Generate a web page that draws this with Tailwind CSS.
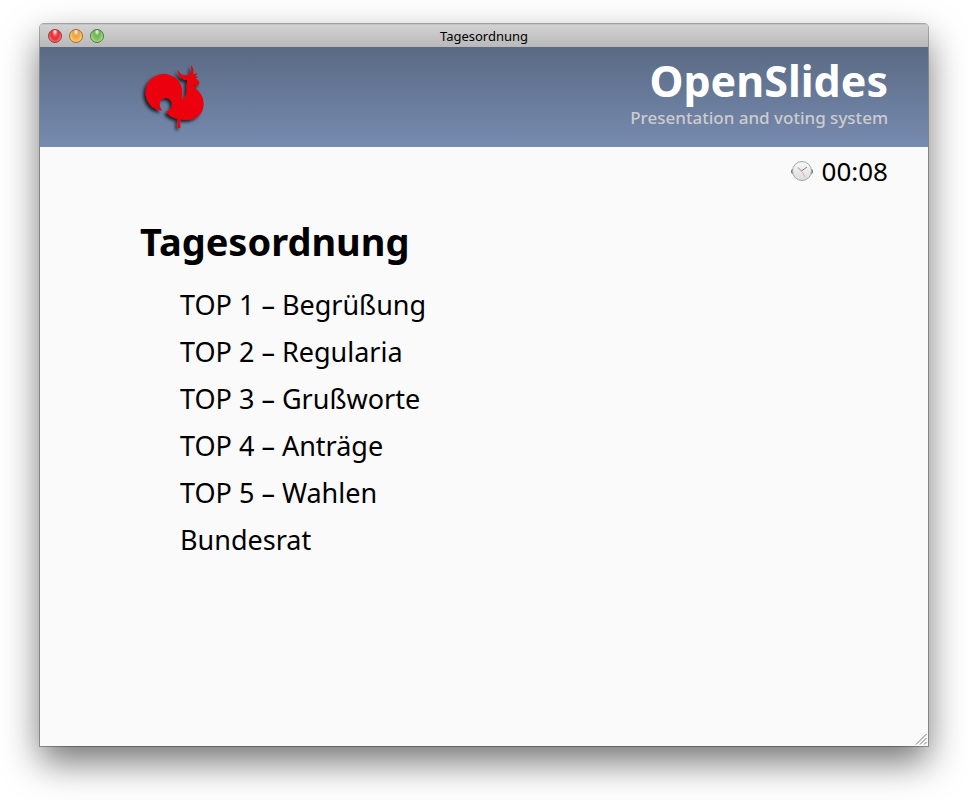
<!DOCTYPE html>
<html lang="de">
<head>
<meta charset="utf-8">
<meta name="viewport" content="width=device-width, initial-scale=1">
<title>Tagesordnung</title>
<script src="https://cdn.jsdelivr.net/npm/@tailwindcss/browser@4"></script>
</head>
<body class="flex min-h-screen flex-col bg-white px-10 pt-6 pb-[54px] font-['Noto_Sans','Open_Sans',sans-serif] text-black">
<div class="relative flex flex-1 flex-col rounded-t bg-[#fafafa] shadow-[0_0_0_1px_rgba(0,0,0,0.3),0_16px_36px_rgba(0,0,0,0.55)]">
  <div class="grid h-[23px] grid-cols-3 items-center rounded-t border-t border-[#c4c4c4] bg-linear-to-b from-[#d2d2d2] to-[#b9b9b9] px-2">
    <div class="flex gap-[7px]">
      <button aria-label="Schließen" class="size-3.5 rounded-full border border-[#8b3c3c] bg-[radial-gradient(ellipse_at_50%_15%,#fff_0,#f04a4a_28%,#ee2b35_50%,#ffb0b0_100%)]"></button>
      <button aria-label="Minimieren" class="size-3.5 rounded-full border border-[#a06a35] bg-[radial-gradient(ellipse_at_50%_15%,#fff_0,#eda04a_28%,#f5ae50_50%,#fff0a0_100%)]"></button>
      <button aria-label="Zoomen" class="size-3.5 rounded-full border border-[#4c7a3c] bg-[radial-gradient(ellipse_at_50%_15%,#fff_0,#6eb456_28%,#7ec060_50%,#d4f5ac_100%)]"></button>
    </div>
    <div class="text-center text-[13px] leading-5">Tagesordnung</div>
  </div>
  <header class="flex h-[100px] items-start justify-between bg-linear-to-b from-[#5a6a84] to-[#778bb0] pr-10 pl-[90px]">
    <svg class="mt-2 h-[85px] w-[90px]" viewBox="0 0 270 255" role="img" aria-label="Logo">
      <defs><filter id="shadow" x="-20%" y="-20%" width="140%" height="140%"><feDropShadow dx="-7" dy="7" stdDeviation="5" flood-color="#000" flood-opacity=".75"/></filter></defs>
      <g filter="url(#shadow)" fill="#ed0007">
        <path d="M97 167C68 165 47 142 47 112C47 81 71 57 102 57C133 57 157 81 157 110C157 120 156 128 154 134C166 128 171 117 170 103C169 91 172 82 172 75C158 77 144 65 142 43C149 57 160 64 174 60C184 56 186 45 182 30C190 37 193 48 189 58L203 55L195 64L205 66L196 71L204 75C202 78 196 78 191 80C188 88 193 97 202 105C213 114 221 130 221 146C221 176 199 194 172 194C145 194 120 188 108 170C120 167 126 159 126 148C126 137 118 129 108 129C97 129 89 137 89 147C89 155 92 161 97 167Z"/>
        <circle cx="199" cy="84" r="9"/>
        <path d="M143 190H151V219H143Z"/>
      </g>
      <circle cx="181" cy="68" r="2" fill="#7b2030"/>
    </svg>
    <div class="text-right">
      <h1 class="pt-1.5 text-[43px] leading-[56px] font-bold text-white">OpenSlides</h1>
      <p class="text-[17px] leading-[18px] font-medium text-[#cccccc]">Presentation and voting system</p>
    </div>
  </header>
  <div class="flex items-center justify-end gap-2 pt-2 pr-10">
    <svg class="size-6" viewBox="0 0 24 24" aria-hidden="true">
      <defs><linearGradient id="face" x1="0" y1="0" x2="0" y2="1"><stop stop-color="#f9f9f9"/><stop offset="1" stop-color="#dcdcdc"/></linearGradient></defs>
      <rect x="1" y="10" width="22" height="5" rx="2" fill="#777"/>
      <circle cx="12" cy="12" r="9.5" fill="url(#face)" stroke="#a4a4a4"/>
      <path d="M8 8.5L11.5 12L17 8" fill="none" stroke="#777" stroke-width=".9"/><path d="M11.5 12L15 18" stroke="#e09a90" stroke-width=".8"/>
    </svg>
    <time class="text-[26px] leading-8">00:08</time>
  </div>
  <main class="px-[100px] pt-7">
    <h2 class="text-[38px] leading-[52px] font-bold">Tagesordnung</h2>
    <ul class="pt-3.5 pl-10 text-[27px] leading-[47px]">
      <li>TOP 1 – Begrüßung</li>
      <li>TOP 2 – Regularia</li>
      <li>TOP 3 – Grußworte</li>
      <li>TOP 4 – Anträge</li>
      <li>TOP 5 – Wahlen</li>
      <li>Bundesrat</li>
    </ul>
  </main>
  <svg class="absolute right-px bottom-px size-3" viewBox="0 0 12 12" fill="none" stroke="#777" aria-hidden="true"><path d="M1 11.5L11.5 1M5 11.5L11.5 5M9 11.5L11.5 9"/></svg>
</div>
</body>
</html>
